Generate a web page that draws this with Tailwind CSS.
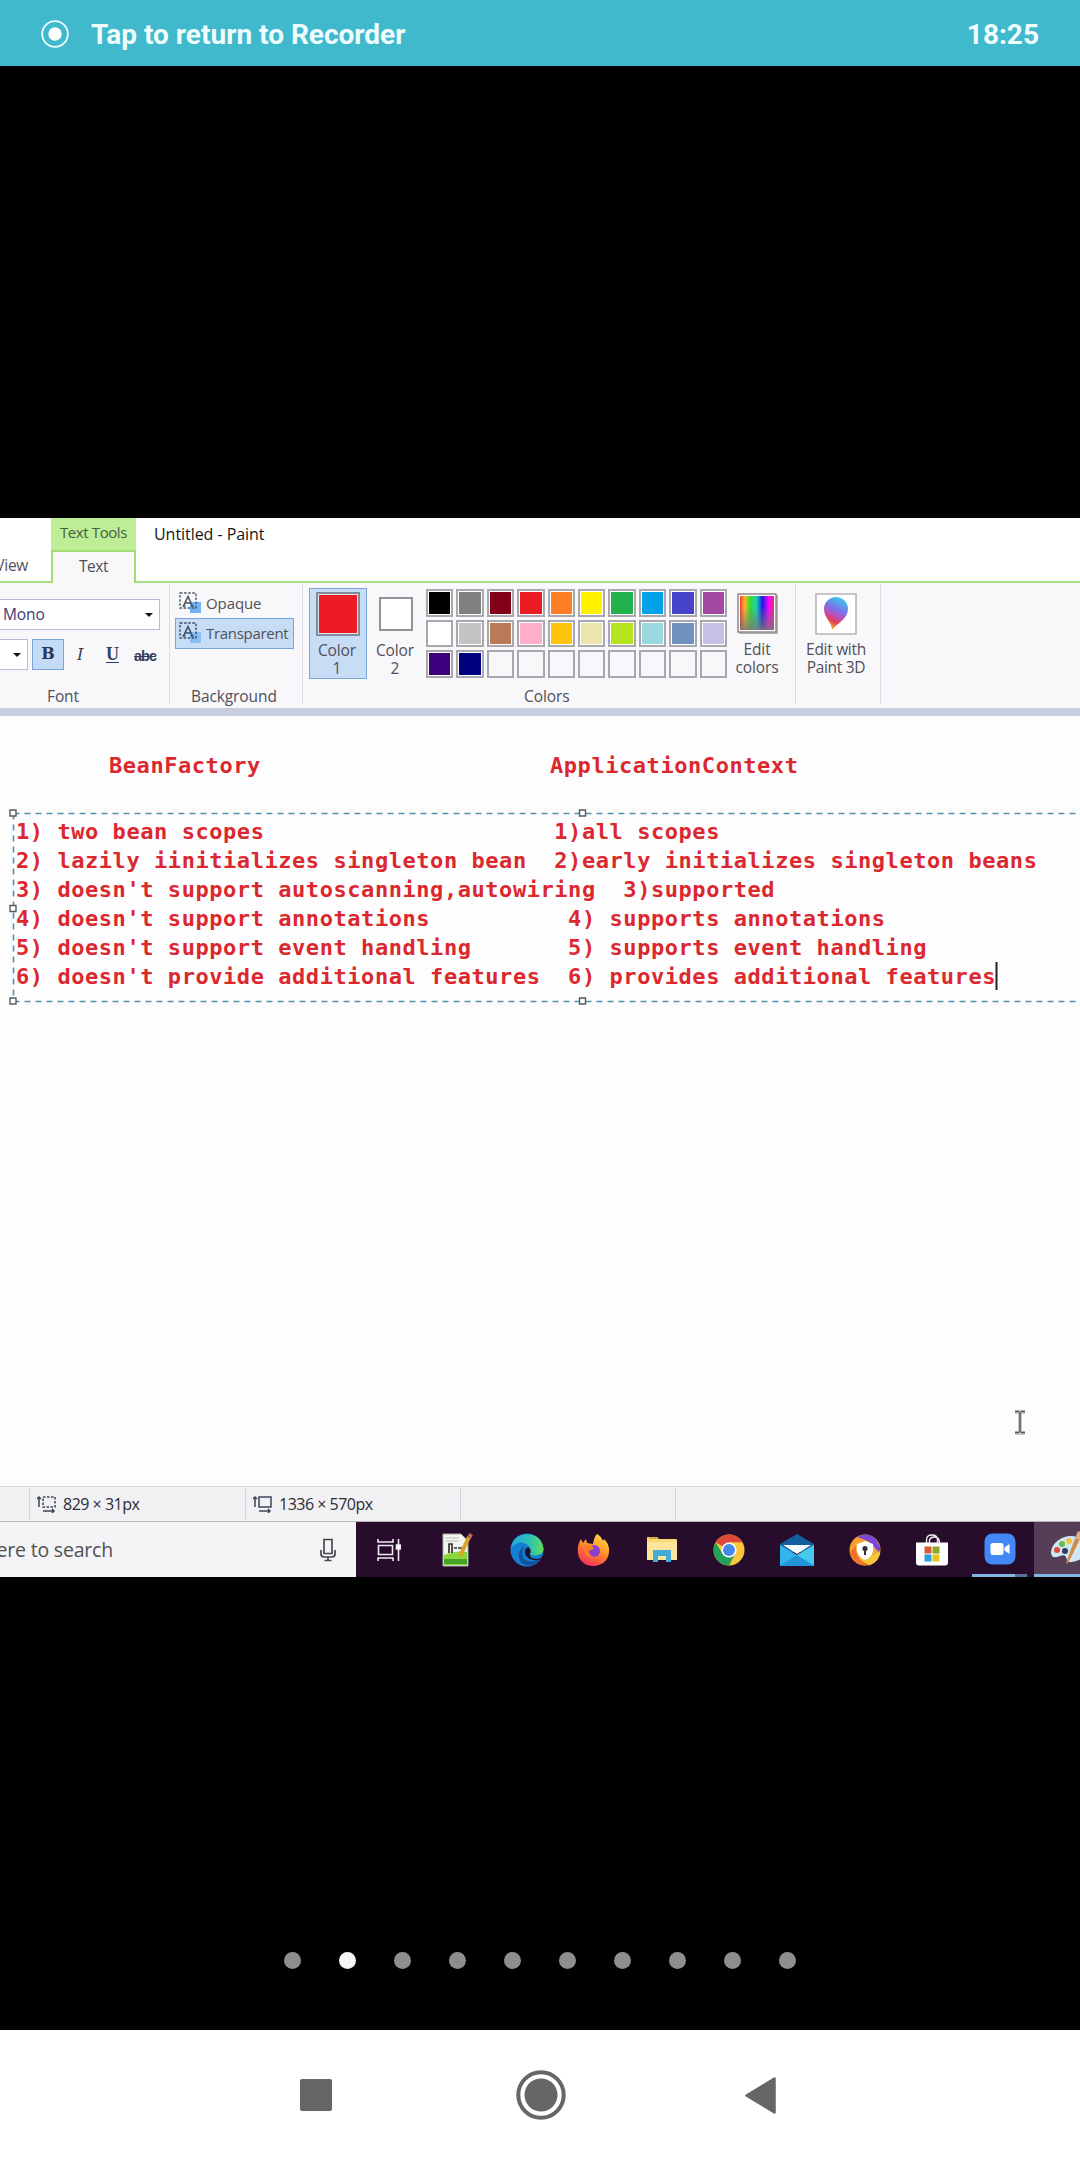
<!DOCTYPE html>
<html lang="en">
<head>
<meta charset="utf-8">
<title>Recorder</title>
<script src="https://cdn.jsdelivr.net/npm/@tailwindcss/browser@4"></script>
</head>
<body class="w-[1080px] h-[2160px] overflow-hidden bg-black flex flex-col font-['Open_Sans',sans-serif] text-[#505058]">

<!-- Recorder status bar -->
<header class="h-[66px] shrink-0 bg-[#40b9cc] text-[#effdff] flex items-center pl-[41px] pr-[41px] pt-[3px] font-['Roboto',sans-serif] font-bold text-[28px]">
  <svg class="w-7 h-7 mr-[22px] -mt-[2px]" viewBox="0 0 28 28"><circle cx="14" cy="14" r="12.8" fill="none" stroke="#effdff" stroke-width="1.8"/><circle cx="14" cy="14" r="6.7" fill="#fff"/></svg>
  <span>Tap to return to Recorder</span>
  <span class="ml-auto">18:25</span>
</header>

<!-- Shared Paint window -->
<main class="mt-[452px] h-[1059px] shrink-0 bg-[#fdfdfe] flex flex-col overflow-hidden">
  <div class="h-[65px] shrink-0 flex items-end bg-white">
    <div class="w-[51px] h-full shrink-0 border-b-2 border-[#a8dd80] flex items-end justify-end pr-[23px] pb-[4px] whitespace-nowrap text-[15.5px] tracking-[-0.3px]">View</div>
    <div class="w-[85px] h-full shrink-0 flex flex-col">
      <div class="h-[32px] bg-[#bdee96] text-center text-[15px] leading-[28px] tracking-[-0.4px] text-[#466040] whitespace-nowrap">Text Tools</div>
      <div class="grow border-2 border-b-0 border-[#a0dd74] bg-[#f8f7fa] text-center text-[15.5px] leading-[28px] tracking-[-0.5px]">Text</div>
    </div>
    <div class="grow h-full border-b-2 border-[#a8dd80] pl-[18px] text-[16px] leading-[32px] tracking-[-0.05px] text-[#151515]">Untitled - Paint</div>
  </div>

  <!-- Ribbon -->
  <div class="h-[125px] shrink-0 bg-[#f8f7fa] flex text-[15.5px] tracking-[-0.1px] pb-[4px] pt-[1px]">
    <section class="w-[170px] border-r border-[#dddce2] flex flex-col pt-[15px]">
      <div class="h-[31px] w-[160px] bg-white border border-l-0 border-[#b2bdd1] flex items-center justify-between pl-[3px] pr-[6px] text-[#3e3a75]"><span>Mono</span><svg class="w-2 h-2" viewBox="0 0 8 8"><path d="M0 2h8L4 6z" fill="#151515"/></svg></div>
      <div class="flex mt-[9px] h-[31px] items-center text-[#34405a]">
        <div class="w-[28px] h-full bg-white border border-l-0 border-[#b2bdd1] flex items-center justify-end pr-[6px]"><svg class="w-2 h-2" viewBox="0 0 8 8"><path d="M0 2h8L4 6z" fill="#151515"/></svg></div>
        <div class="ml-[4px] w-[32px] h-full bg-[#c4dbf6] border border-[#7ba5d8] text-center font-['DejaVu_Serif',serif] font-bold text-[16px] leading-[28px] text-[#263852]">B</div>
        <div class="w-[32px] text-center font-['DejaVu_Serif',serif] italic text-[16px]">I</div>
        <div class="w-[33px] text-center font-['Liberation_Serif',serif] font-bold text-[18px] underline underline-offset-2">U</div>
        <div class="w-[32px] text-center font-['Liberation_Sans',sans-serif] text-[14.5px] line-through font-bold -tracking-[1px] mt-1">abc</div>
      </div>
      <div class="pl-[47px] mt-[18px] leading-[16px]">Font</div>
    </section>
    <section class="w-[133px] border-r border-[#dddce2] flex flex-col pt-[4px] pl-[5px]">
      <div class="h-[30px] flex items-center pl-[4px] text-[15px]">
        <svg class="w-[22px] h-[22px] mr-[5px]" viewBox="0 0 22 22"><rect x="11" y="10" width="11" height="11" fill="#70b2f5"/><path d="M1 1h16v15H1z" fill="none" stroke="#4b5566" stroke-width="1.4" stroke-dasharray="2.5 1.6"/><path d="M4.500 14L9 4.500L13.500 14M6.500 11h5M3.500 14h3M11.500 14h3" fill="none" stroke="#4b5566" stroke-width="1.6"/></svg>Opaque</div>
      <div class="h-[31px] w-[119px] border border-[#7ba5d8] bg-[#c7ddf6] flex items-center pl-[3px] text-[15px] tracking-[-0.3px] whitespace-nowrap">
        <svg class="w-[22px] h-[22px] mr-[5px] shrink-0 -mt-[2px]" viewBox="0 0 22 22"><rect x="11" y="10" width="11" height="11" fill="#88bff8"/><path d="M1 1h16v15H1z" fill="none" stroke="#3d4d66" stroke-width="1.4" stroke-dasharray="2.5 1.6"/><path d="M4.500 14L9 4.500L13.500 14M6.500 11h5M3.500 14h3M11.500 14h3" fill="none" stroke="#3d4d66" stroke-width="1.6"/></svg>Transparent</div>
      <div class="pl-[16px] mt-[39px] leading-[16px]">Background</div>
    </section>
    <section class="w-[493px] border-r border-[#dddce2] flex flex-col pt-[4px] pl-[6px]">
      <div class="flex h-[91px] items-start text-center leading-[18px]">
        <div class="w-[58px] h-[91px] border border-[#7ba5d8] bg-[#c7ddf6] flex flex-col items-center pt-[3px]">
          <div class="w-[44px] h-[44px] border-2 border-[#858b96] p-[1px] bg-[#dde8f5]"><div class="w-full h-full bg-[#ed1c24]"></div></div>
          <div class="mt-[5px] pr-[2px]">Color<br>1</div>
        </div>
        <div class="w-[56px] flex flex-col items-center pt-[9px]">
          <div class="w-[34px] h-[34px] ml-[2px] border-2 border-[#929298] bg-white"></div>
          <div class="mt-[10px]">Color<br>2</div>
        </div>
        <div id="palette" class="w-[301px] ml-[3px] pt-[1px] grid grid-cols-10 gap-[3px]"></div>
        <div class="w-[60px] flex flex-col items-center pt-[5px]">
          <svg class="w-[41px] h-[41px]" viewBox="0 0 41 41"><defs><linearGradient id="hue"><stop offset="0" stop-color="#f33"/><stop offset=".14" stop-color="#fb2"/><stop offset=".3" stop-color="#3d3"/><stop offset=".48" stop-color="#1cd5b0"/><stop offset=".66" stop-color="#1a18e8"/><stop offset=".84" stop-color="#f0f"/><stop offset="1" stop-color="#e03070"/></linearGradient><linearGradient id="shade" x2="0" y2="1"><stop offset=".3" stop-color="#777" stop-opacity="0"/><stop offset="1" stop-color="#777" stop-opacity=".85"/></linearGradient></defs><rect x="2" y="2" width="39" height="39" fill="#b5b0b3"/><rect x="1" y="1" width="38" height="38" fill="#fff" stroke="#94888c" stroke-width="1.500"/><path d="M3 3h34v34H3z" fill="url(#hue)"/><path d="M3 3h34v34H3z" fill="url(#shade)"/></svg>
          <div class="mt-[6px]">Edit<br>colors</div>
        </div>
      </div>
      <div class="pl-[215px] mt-[9px] leading-[16px]">Colors</div>
    </section>
    <section class="w-[85px] border-r border-[#dddce2] flex flex-col items-center pt-[9px] pr-[4px] text-center leading-[18px] whitespace-nowrap text-[15.5px] tracking-[-0.3px]">
      <svg class="w-[42px] h-[42px]" viewBox="0 0 42 42"><defs><linearGradient id="drop" x1=".7" x2=".35" y2="1"><stop offset="0" stop-color="#35cdf2"/><stop offset=".4" stop-color="#7d70e8"/><stop offset=".6" stop-color="#c34bb0"/><stop offset=".75" stop-color="#e43f58"/><stop offset="1" stop-color="#f9b820"/></linearGradient></defs><rect x="1" y="1" width="40" height="40" fill="#fff" stroke="#b4b2b8" stroke-width="1.500"/><path d="M17 37C17 29 9 25 9 16A12 12 0 0 1 33 16C33 26 22 30 17 37z" fill="url(#drop)"/></svg>
      <div class="mt-[5px]">Edit with<br>Paint 3D</div>
    </section>
  </div>
  <div class="h-[8px] shrink-0 bg-[#c8cde0]"></div>

  <!-- Canvas -->
  <div class="relative h-[770px] shrink-0 font-['DejaVu_Sans_Mono',monospace] font-bold text-[22px] tracking-[0.558px] leading-[29px] text-[#db282e]">
    <div class="flex pt-[35px] pl-[109px]"><span class="w-[441px]">BeanFactory</span><span>ApplicationContext</span></div>
    <div class="pl-[16px] pt-[37px] whitespace-pre">1) two bean scopes                     1)all scopes
2) lazily iinitializes singleton bean  2)early initializes singleton beans
3) doesn't support autoscanning,autowiring  3)supported
4) doesn't support annotations          4) supports annotations
5) doesn't support event handling       5) supports event handling
6) doesn't provide additional features  6) provides additional features</div>
    <svg class="absolute left-0 top-[80px] w-[1080px] h-[220px]" viewBox="0 0 1080 220" fill="none">
      <path d="M13.500 17.500H1080M13.500 205.500H1080M13.500 17.500V205" stroke="#5690ad" stroke-width="1.600" stroke-dasharray="6 5"/>
      <g fill="#fff" stroke="#555b62" stroke-width="1.400"><path d="M10 14h6v6h-6zM10 109.500h6v6h-6zM10 202h6v6h-6zM579.500 14h6v6h-6zM579.500 202h6v6h-6z"/></g>
      <path d="M996.500 166v28" stroke="#222" stroke-width="2"/>
    </svg>
    <svg class="absolute left-[1014px] top-[692px] w-[12px] h-[28px]" viewBox="0 0 12 28" fill="none"><path d="M1 4h10M1 25h10M6 4v21" stroke="#c8c8cd" stroke-width="4"/><path d="M1 3.500h4.500M7 3.500h4M1 24.500h4.500M7 24.500h4M6 4v20" stroke="#55535e" stroke-width="1.500"/></svg>
  </div>

  <!-- Paint status row -->
  <div class="h-[36px] shrink-0 bg-[#f1f0f3] border-t border-b border-t-[#d8d6dc] border-b-[#b8b5bb] flex items-stretch py-[2px] text-[16px] text-[#2c2c34] tracking-[-0.5px]">
    <div class="w-[30px] border-r border-[#d5d3d9]"></div>
    <div class="w-[216px] border-r border-[#d5d3d9] flex items-center pl-[7px]"><svg class="w-[19px] h-[18px] mr-[7px]" viewBox="0 0 19 18" fill="none" stroke="#3d4658" stroke-width="1.500"><path d="M6 2h12v10H6z" stroke-dasharray="2.500 1.500"/><path d="M2 12V2M0 4l2-2 2 2M6 16h11M15 14l2 2-2 2"/></svg><span>829 × 31px</span></div>
    <div class="w-[215px] border-r border-[#d5d3d9] flex items-center pl-[7px]"><svg class="w-[19px] h-[18px] mr-[7px]" viewBox="0 0 19 18" fill="none" stroke="#3d4658" stroke-width="1.500"><path d="M6 2h12v10H6z"/><path d="M2 12V2M0 4l2-2 2 2M6 16h11M15 14l2 2-2 2"/></svg><span>1336 × 570px</span></div>
    <div class="w-[215px] border-r border-[#d5d3d9]"></div>
  </div>

  <!-- Windows taskbar -->
  <div class="h-[55px] shrink-0 bg-[#270d2b] flex">
    <div class="w-[356px] shrink-0 bg-[#f4f3f5] flex items-center justify-between pr-[20px] text-[19.5px] tracking-[-0.2px] text-[#505054]">
      <span class="w-[113px] flex justify-end whitespace-nowrap overflow-hidden">Type here to search</span>
      <svg class="w-[16px] h-[24px]" viewBox="0 0 16 24" fill="none" stroke="#47474c" stroke-width="1.700"><path d="M4 1.500h8v14H4zM1 12v4q0 3 3 3h8q3 0 3-3v-4M8 19v3M4.500 22.500h7"/></svg>
    </div>
    <div class="w-[67px] shrink-0 flex items-center justify-center pr-[2px]"><svg class="w-6 h-[22px]" viewBox="0 0 24 22" fill="none" stroke="#efeaf2" stroke-width="1.600"><path d="M1 0v3h15V0M1 22v-3h15v3M1.500 6.500h14v9h-14zM21.500 0v22"/><path d="M19.500 6h4v4h-4z" fill="#fff"/></svg></div>
    <div class="w-[68px] shrink-0 flex items-center justify-center"><svg class="w-[32px] h-[34px]" viewBox="0 0 32 34"><path d="M2 1h18l7 7v25H2z" fill="#f3f4f0" stroke="#aaa"/><path d="M5 5h13M5 8h13" stroke="#bbb"/><path d="M3 22q12-5 23-3v13H3z" fill="#8cd63c"/><path d="M3 26h23v5H3z" fill="#42a526"/><path d="M8 20v-9h3v9M13 15h3M17 15h4" fill="none" stroke="#333" stroke-width="1.700"/><path d="M28 4L19 23" stroke="#dba428" stroke-width="4"/><path d="M30 1l-2 4" stroke="#b96a50" stroke-width="4"/></svg></div>
    <div class="w-[68px] shrink-0 flex items-center justify-center pl-[3px]"><svg class="w-[34px] h-[34px]" viewBox="0 0 34 34"><defs><linearGradient id="edge"><stop offset="0" stop-color="#28a8e6"/><stop offset=".6" stop-color="#2fc3b0"/><stop offset="1" stop-color="#62dd52"/></linearGradient></defs><circle cx="17" cy="17" r="16.500" fill="#137fd0"/><path d="M1 16C2-3 32-4 33.500 16C34 22 24 24 20 21C23 13 14 8 8 10Q3 12 1 16z" fill="url(#edge)"/><path d="M13 17C9 27 21 33 32 24C26 36 8 35 9 22Q9 17 14 13z" fill="#12519d"/><path d="M20 21c-1 2 1 5 7 5 4 0 7-3 7-3l-2 3c-8 3-17 0-17-7q0-4 3-5 4 2 2 7z" fill="#270d2b"/></svg></div>
    <div class="w-[68px] shrink-0 flex items-center justify-center pl-[1px]"><svg class="w-[33px] h-[34px]" viewBox="0 0 33 34"><defs><linearGradient id="fox" x1=".8" y1="0" x2=".3" y2="1"><stop offset="0" stop-color="#ffe245"/><stop offset=".5" stop-color="#ff8a28"/><stop offset="1" stop-color="#f52f5e"/></linearGradient></defs><path d="M20 1q4 2 6 7l1-2q6 6 5 13C31 37 3 38 1 20Q0 12 4 6l2 4 3-4 1 4 6 1q1-7 4-10z" fill="url(#fox)"/><circle cx="17" cy="18" r="6" fill="#8a3fd0"/><path d="M7 14q6-4 10 1-2 3-5 2-1 5 5 7-9 2-10-10z" fill="#ff7a26"/></svg></div>
    <div class="w-[68px] shrink-0 flex items-center justify-center pl-[2px]"><svg class="w-[30px] h-[27px]" viewBox="0 0 30 27"><path d="M0 2q0-1 1-1h9l2 2h17q1 0 1 1v20H0z" fill="#f9d978"/><path d="M2 1h9v2H2z" fill="#e0a83c"/><path d="M0 6h30v18H0z" fill="#fde49b"/><path d="M6 26V14h18v12h-5v-6h-8v6z" fill="#45acd8"/></svg></div>
    <div class="w-[68px] shrink-0 flex items-center justify-center"><svg class="w-[32px] h-[32px]" viewBox="0 0 32 32"><circle cx="16" cy="16" r="15.500" fill="#fbc63c"/><path d="M16 16L2.600 8.250A15.500 15.500 0 0 1 29.400 8.250H16z" fill="#dd483b"/><path d="M2.600 8.250A15.500 15.500 0 0 0 16 31.500L22.500 19.500 16 16 9.500 19.500z" fill="#23a05a"/><circle cx="16" cy="16" r="7.600" fill="#fff"/><circle cx="16" cy="16" r="6" fill="#4688ec"/></svg></div>
    <div class="w-[68px] shrink-0 flex items-center justify-center"><svg class="w-[34px] h-[32px]" viewBox="0 0 34 32"><path d="M0 10L17 0 34 10v8H0z" fill="#125f9e"/><path d="M0 11l17 10 17-10v21H0z" fill="#33b4ea"/><path d="M17 21l17 11H0z" fill="#2096d8"/><path d="M34 11L17 21l17 10z" fill="#47c9f2"/><path d="M3 11h28L17 20z" fill="#f5fbff"/></svg></div>
    <div class="w-[68px] shrink-0 flex items-center justify-center"><svg class="w-[32px] h-[32px]" viewBox="0 0 32 32"><circle cx="16" cy="16" r="15.500" fill="#f7a12c"/><path d="M8 3q16-8 23 10v6L19 7z" fill="#7947d6"/><path d="M31 17q0 11-11 14.500L10 25l14-4z" fill="#f2c839"/><path d="M1 18q3 11 14 13.500l5-1Q6 27 7 12z" fill="#f2702a"/><path d="M16 7l8 3q2 12-8 16Q6 22 8 10z" fill="#fff"/><circle cx="16" cy="14.500" r="2.600" fill="#34303e"/><path d="M15 15h2v6h-2z" fill="#34303e"/></svg></div>
    <div class="w-[68px] shrink-0 flex items-center justify-center pr-[2px]"><svg class="w-[32px] h-[32px]" viewBox="0 0 32 32"><path d="M10.500 9V6q0-5 5.500-5t5.500 5v3M13.500 9V6q1-3 5-3 5 0 5 6" fill="none" stroke="#eee" stroke-width="1.400"/><path d="M0 8.500h32v20q0 3-3 3H3q-3 0-3-3z" fill="#fff"/><path d="M8.500 12.500h7v7h-7z" fill="#d65a36"/><path d="M16.500 12.500h7v7h-7z" fill="#8aa82c"/><path d="M8.500 20.500h7v7h-7z" fill="#28a0e0"/><path d="M16.500 20.500h7v7h-7z" fill="#e5c41c"/></svg></div>
    <div class="w-[67px] shrink-0 flex flex-col items-center justify-end pr-[2px]"><svg class="w-[32px] h-[32px] mb-[9px]" viewBox="0 0 32 32"><rect x=".5" y=".5" width="31" height="31" rx="8" fill="#4388f6"/><rect x="6.500" y="10" width="13" height="12" rx="2.500" fill="#fff"/><path d="M20.500 14.500l5-3.500v10l-5-3.500z" fill="#fff"/></svg><div class="w-[55px] h-[3px] flex"><div class="w-[43px] bg-[#82b4e4]"></div><div class="grow bg-[#567298]"></div></div></div>
    <div class="w-[46px] shrink-0 bg-[#553f56] border-b-[3px] border-[#82b4e4] overflow-hidden flex items-center pl-[16px]"><svg class="w-[40px] h-[34px] shrink-0" viewBox="0 0 40 34"><path d="M1 21C2 10 16 2 27 6q10 3 10 11-1 12-15 14-5 1-6-5-1-3-6-1-9 4-9-4z" fill="#cfe7f5"/><circle cx="7" cy="19" r="3" fill="#e5493e"/><circle cx="12" cy="13" r="3" fill="#6dbb4b"/><circle cx="19" cy="10" r="3" fill="#f2c441"/><circle cx="15" cy="20" r="3" fill="#333c58"/><path d="M28 2L17 32l12-24z" fill="#d88942" stroke="#d88942" stroke-width="2"/><path d="M25 8q2-7 6-8v9z" fill="#dfb18a"/></svg></div>
  </div>
</main>

<!-- Page indicator -->
<div id="dots" class="h-[453px] shrink-0 flex justify-center gap-[38px] pt-[375px]"></div>

<!-- Android navigation -->
<nav class="h-[130px] shrink-0 bg-white flex items-center pl-[300px]">
  <div class="w-[32px] h-[32px] rounded-[2px] bg-[#666]"></div>
  <svg class="w-[50px] h-[50px] ml-[183.5px] mr-[179.5px]" viewBox="0 0 50 50"><circle cx="25" cy="25" r="22.700" fill="none" stroke="#666" stroke-width="4"/><circle cx="25" cy="25" r="16.500" fill="#666"/></svg>
  <svg class="w-[31px] h-[37px]" viewBox="0 0 31 37"><path d="M29.500 1.500v34L1.500 18.500z" fill="#666" stroke="#666" stroke-width="2.500" stroke-linejoin="round"/></svg>
</nav>

<script>
const colors = ['#000','#7f7f7f','#82001a','#ed1c24','#ff7f27','#fff200','#22b14c','#00a2e8','#4643ca','#a349a4',
 '#fff','#c3c3c3','#b97a57','#ffaec9','#ffc40e','#ece4aa','#b5e61d','#99d9de','#7092be','#c8bfe4','#3f007f','#00007f'];
for (let i = 0; i < 30; i++) {
  const cell = document.createElement('div');
  cell.className = 'h-[27.5px] border-2 border-[#a8a8ae] p-[1px] ' + (i < 22 ? 'bg-white' : 'bg-[#f8f7fa]');
  if (i < 22) {
    const fill = document.createElement('div');
    fill.className = 'w-full h-full';
    fill.style.background = colors[i];
    cell.append(fill);
  }
  document.getElementById('palette').append(cell);
}
for (let i = 0; i < 10; i++) {
  const dot = document.createElement('div');
  dot.className = 'w-[17px] h-[17px] rounded-full ' + (i === 1 ? 'bg-[#f5f5f5]' : 'bg-[#8e8e8e]');
  document.getElementById('dots').append(dot);
}
</script>
</body>
</html>
